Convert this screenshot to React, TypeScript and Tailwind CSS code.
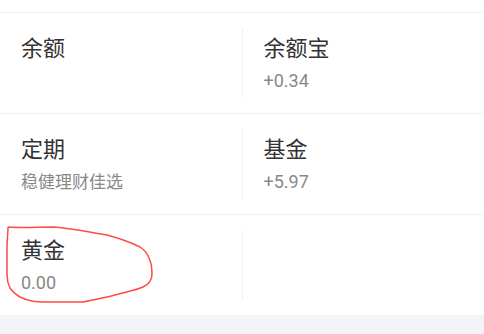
const rows: { title: string; sub?: string }[][] = [
  [{ title: "余额" }, { title: "余额宝", sub: "+0.34" }],
  [
    { title: "定期", sub: "稳健理财佳选" },
    { title: "基金", sub: "+5.97" },
  ],
  [{ title: "黄金", sub: "0.00" }, { title: "" }],
]

function Cell({ title, sub }: { title: string; sub?: string }) {
  const numeric = sub !== undefined && /^[+\-0-9.]+$/.test(sub)
  return (
    <div className="flex-1 pl-[21px] pt-[22px]">
      <div className="text-[22px] leading-[28px] text-[#333333]">{title}</div>
      {sub && (
        <div className={"mt-[6px] leading-[24px] text-[#888888] " + (numeric ? "text-[18px]" : "text-[17px]")}>
          {sub}
        </div>
      )}
    </div>
  )
}

export default function App() {
  return (
    <div
      className="relative w-[484px] h-[334px] bg-[#f4f4f8] overflow-hidden"
      style={{ fontFamily: "Roboto, 'Noto Sans CJK SC', sans-serif" }}
    >
      <div className="bg-white">
        <div className="h-[13px] border-b border-[#f0f0f0]" />
        {rows.map((row, i) => (
          <div
            key={i}
            className={"flex " + (i < rows.length - 1 ? "h-[101px] border-b border-[#f0f0f0]" : "h-[100px]")}
          >
            <Cell {...row[0]} />
            <div className="w-px my-[15px] bg-[#f0f0f0]" />
            <Cell {...row[1]} />
          </div>
        ))}
      </div>

      <svg className="absolute left-0 top-0 pointer-events-none" width="484" height="334" viewBox="0 0 484 334">
        <path
          d="M8 227 C20 228 40 227 53 227 C68 228 90 232 107 235 C118 238 130 242 140 247 C146 251 148 255 149 258 C151 262 152 268 152 274 C152 280 150 284 143 287 C136 290 130 291 127 292 C118 294 112 296 107 297 C98 299 90 301 83 302 C70 302 60 302 50 302 C40 302 36 302 32 301 C26 300 22 298 20 297 C15 294 12 291 10 288 C8 284 7 280 7 275 C7 265 7 256 7 248 C7 240 8 233 8 227"
          fill="none"
          stroke="#ff4a4a"
          strokeWidth="1.5"
          strokeLinejoin="round"
        />
      </svg>
    </div>
  )
}
